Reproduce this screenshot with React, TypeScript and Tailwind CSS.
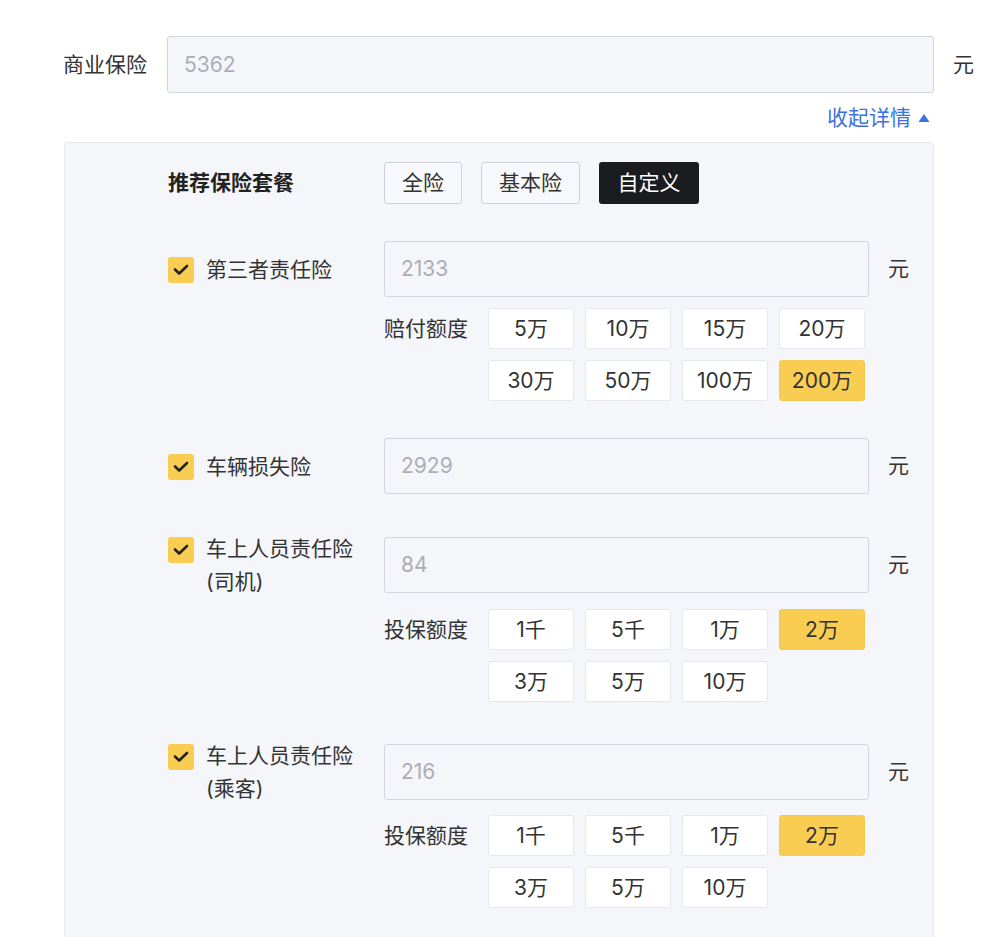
import React from "react";

const FONT = { fontFamily: '"Inter", "Noto Sans CJK SC", sans-serif' };

function Check() {
  return (
    <div className="mt-[4.5px] flex h-[26px] w-[26px] shrink-0 items-center justify-center rounded-[3px] bg-[#f8cd52]">
      <svg width="16" height="12" viewBox="0 0 16 12" fill="none">
        <path d="M2 5.5l4.2 4L14 2" stroke="#222" strokeWidth="2.6" strokeLinecap="round" strokeLinejoin="round" />
      </svg>
    </div>
  );
}

function Options({ label, items, selected, className }: { label: string; items: string[]; selected: string; className?: string }) {
  return (
    <div className={"ml-[216px] flex " + (className || "mt-[11px]")}>
      <div className="flex h-[41px] w-[104px] items-center text-[21px] text-[#333]">{label}</div>
      <div className="grid grid-cols-[repeat(4,86px)] gap-[11px]">
        {items.map((it) => (
          <div
            key={it}
            className={
              "flex h-[41px] items-center justify-center rounded-[3px] border text-[21px] text-[#333] " +
              (it === selected ? "border-[#f3c84c] bg-[#f8cd52]" : "border-[#e6e8ee] bg-white")
            }
          >
            {it}
          </div>
        ))}
      </div>
    </div>
  );
}

function Row({ label, value, className }: { label: React.ReactNode; value: string; className?: string }) {
  return (
    <div className={"flex items-center " + (className || "")}>
      <div className="flex w-[216px] items-start self-stretch">
        <div className="flex items-start self-center">
          <Check />
          <div className="ml-[12px] text-[21px] leading-[33px] text-[#333]">{label}</div>
        </div>
      </div>
      <div className="flex h-[56px] w-[485px] items-center rounded-[3px] border border-[#d3d5dc] bg-[#f5f6fa] px-[16px] text-[21px] text-[#abaeb6]">
        {value}
      </div>
      <div className="ml-[19px] text-[21px] text-[#333]">元</div>
    </div>
  );
}

export default function App() {
  return (
    <div className="min-h-[937px] w-[1000px] bg-white pt-[36px]" style={FONT}>
      <div className="flex items-center">
        <div className="w-[167px] pl-[63px] text-[21px] text-[#333]">商业保险</div>
        <div className="flex h-[57px] w-[767px] items-center rounded-[3px] border border-[#d3d5dc] bg-[#f5f6fa] px-[16px] text-[21px] text-[#abaeb6]">
          5362
        </div>
        <div className="ml-[19px] text-[21px] text-[#333]">元</div>
      </div>
      <div className="mt-[13px] flex h-[24px] w-[930px] items-center justify-end text-[21px] text-[#3a72e0]">
        <span>收起详情</span>
        <svg className="ml-[7px]" width="12" height="10" viewBox="0 0 12 10">
          <path d="M6 1L11.5 9H0.5z" fill="#3a72e0" />
        </svg>
      </div>
      <div className="mt-[12px] ml-[64px] w-[870px] rounded-[4px] border border-[#e6e8ee] bg-[#f5f6fa] pt-[19px] pb-[40px] pl-[103px]">
        <div className="flex h-[42px] items-center">
          <div className="w-[216px] text-[21px] font-bold text-[#222]">推荐保险套餐</div>
          <div className="flex h-[42px] w-[78px] items-center justify-center rounded-[3px] border border-[#cfd1d8] bg-[#f7f8fb] text-[21px] text-[#333]">全险</div>
          <div className="ml-[19px] flex h-[42px] w-[99px] items-center justify-center rounded-[3px] border border-[#cfd1d8] bg-[#f7f8fb] text-[21px] text-[#333]">基本险</div>
          <div className="ml-[19px] flex h-[42px] w-[100px] items-center justify-center rounded-[3px] bg-[#1b1c20] text-[21px] text-white">自定义</div>
        </div>

        <Row className="mt-[37px]" label="第三者责任险" value="2133" />
        <Options label="赔付额度" items={["5万", "10万", "15万", "20万", "30万", "50万", "100万", "200万"]} selected="200万" />

        <Row className="mt-[37px]" label="车辆损失险" value="2929" />

        <Row className="mt-[38px]" label={<>车上人员责任险<br />(司机)</>} value="84" />
        <Options label="投保额度" items={["1千", "5千", "1万", "2万", "3万", "5万", "10万"]} selected="2万" />

        <Row className="mt-[37px]" label={<>车上人员责任险<br />(乘客)</>} value="216" />
        <Options className="mt-[10px]" label="投保额度" items={["1千", "5千", "1万", "2万", "3万", "5万", "10万"]} selected="2万" />
      </div>
    </div>
  );
}
